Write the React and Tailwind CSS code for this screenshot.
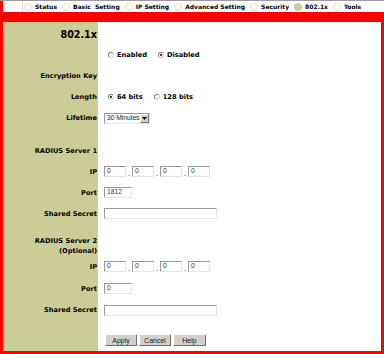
import React from 'react';

const NAV = [
  { label: 'Status' },
  { label: 'Basic\u00a0\u00a0Setting' },
  { label: 'IP Setting' },
  { label: 'Advanced Setting' },
  { label: 'Security' },
  { label: '802.1x', active: true },
  { label: 'Tools' },
];

const LABEL_FONT = { fontFamily: '"DejaVu Sans", Verdana, sans-serif' };
const CTRL_FONT = { fontFamily: '"Liberation Sans", Arial, sans-serif' };

function Row({ h, label, children, labelClass = 'items-center', valueClass = 'pl-[6px]' }) {
  return (
    <div className={`flex ${h}`}>
      <div
        className={`w-[95px] shrink-0 bg-[#cccc99] flex justify-end pr-[1px] text-right text-[6.65px] leading-[10px] font-bold text-black ${labelClass}`}
        style={LABEL_FONT}
      >
        {label}
      </div>
      <div className={`flex-1 flex items-center ${valueClass}`}>{children}</div>
    </div>
  );
}

function Radio({ checked }) {
  return (
    <span className="w-[6px] h-[6px] rounded-full bg-white border border-[#808080] border-r-[#d4d0c8] border-b-[#d4d0c8] flex items-center justify-center shrink-0">
      {checked && <span className="w-[2px] h-[2px] rounded-full bg-black" />}
    </span>
  );
}

function RadioOpt({ checked, label, className = '' }) {
  return (
    <span className={`flex items-center gap-[3px] ${className}`}>
      <Radio checked={checked} />
      <span className="text-[6.65px] font-bold text-black leading-[10px]" style={LABEL_FONT}>{label}</span>
    </span>
  );
}

function Field({ w, value = '' }) {
  return (
    <div
      className={`${w} h-[11px] bg-white border border-[#9a9a9a] border-r-[#e4e4e4] border-b-[#e4e4e4] flex items-center pl-[2px] text-[6.7px] text-[#333] leading-none`}
      style={CTRL_FONT}
    >
      {value}
    </div>
  );
}

function IpFields() {
  return (
    <div className="flex items-center">
      {[0, 1, 2, 3].map((i) => (
        <React.Fragment key={i}>
          {i > 0 && <span className="w-[6px] text-center text-[7px] leading-none text-black pt-[4px]" style={CTRL_FONT}>.</span>}
          <Field w="w-[22px]" value="0" />
        </React.Fragment>
      ))}
    </div>
  );
}

function Btn({ w, children }) {
  return (
    <button
      className={`${w} h-[12px] bg-[#d4d0c8] border border-white border-r-[#6e6e6e] border-b-[#6e6e6e] text-[7px] leading-none text-[#222] flex items-center justify-center`}
      style={CTRL_FONT}
    >
      {children}
    </button>
  );
}

export default function App() {
  return (
    <div className="w-[384px] h-[354px] flex flex-col bg-white overflow-hidden">
      {/* Top tabs */}
      <div className="h-[12px] flex border-t border-[#9c9c9c] bg-white">
        <div className="w-[3px] bg-[#ff0000]" />
        <div className="w-[19px]" />
        <div className="flex-1 flex items-center gap-[5px] border-l border-[#dcdcb8] pl-[1px]">
          {NAV.map((n) => (
            <div key={n.label} className="flex items-center gap-[3px]">
              <span
                className={`w-[8px] h-[8px] rounded-full border ${
                  n.active ? 'bg-[#cccc99] border-[#c4c494]' : 'bg-[#fcfcf4] border-[#deded0]'
                }`}
              />
              <span className="text-[6px] font-bold text-black leading-none whitespace-nowrap" style={LABEL_FONT}>
                {n.label}
              </span>
            </div>
          ))}
        </div>
      </div>
      <div className="h-[10px] bg-[#ff0000]" />

      {/* Form */}
      <div className="flex-1 flex flex-col border-x-[3px] border-b-[3px] border-[#ff0000]">
        <Row
          h="h-[25px]"
          labelClass="items-end pb-[7px]"
          label={<span className="text-[9.6px] leading-none" style={LABEL_FONT}>802.1x</span>}
        />
        <Row h="h-[16px]" valueClass="pl-[10px]">
          <RadioOpt label="Enabled" />
          <RadioOpt checked label="Disabled" className="ml-[11px]" />
        </Row>
        <Row h="h-[26px]" label="Encryption Key" />
        <Row h="h-[16px]" label="Length" valueClass="pl-[10px]">
          <RadioOpt checked label="64 bits" />
          <RadioOpt label="128 bits" className="ml-[11px]" />
        </Row>
        <Row h="h-[26px]" label="Lifetime">
          <div
            className="w-[46px] h-[11px] bg-white border border-[#9a9a9a] border-r-[#e4e4e4] border-b-[#e4e4e4] flex items-center"
            style={CTRL_FONT}
          >
            <span className="flex-1 pl-[2px] text-[6.7px] leading-none text-[#222] whitespace-nowrap">30 Minutes</span>
            <span className="w-[9px] h-full bg-[#d4d0c8] border border-white border-r-[#6e6e6e] border-b-[#6e6e6e] flex items-center justify-center">
              <svg width="5" height="3" viewBox="0 0 5 3">
                <path d="M0 0h5L2.5 3z" fill="#000" />
              </svg>
            </span>
          </div>
        </Row>
        <Row h="h-[10px]" />
        <Row h="h-[20px]" label="RADIUS Server 1" />
        <Row h="h-[21px]" label="IP">
          <IpFields />
        </Row>
        <Row h="h-[21px]" label="Port">
          <Field w="w-[28px]" value="1812" />
        </Row>
        <Row h="h-[21px]" label="Shared Secret">
          <Field w="w-[113px]" />
        </Row>
        <Row
          h="h-[32px]"
          labelClass="items-end"
          label={
            <span>
              RADIUS Server 2
              <br />
              (Optional)
            </span>
          }
        />
        <Row h="h-[21px]" label="IP">
          <IpFields />
        </Row>
        <Row h="h-[23px]" label="Port">
          <Field w="w-[28px]" value="0" />
        </Row>
        <Row h="h-[20px]" label="Shared Secret">
          <Field w="w-[113px]" />
        </Row>
        <Row h="h-[10px]" />
        <Row h="h-[20px]" valueClass="pl-[7px] gap-[2px]">
          <Btn w="w-[32px]">Apply</Btn>
          <Btn w="w-[32px]">Cancel</Btn>
          <Btn w="w-[33px]">Help</Btn>
        </Row>
        <Row h="flex-1" />
      </div>
    </div>
  );
}
